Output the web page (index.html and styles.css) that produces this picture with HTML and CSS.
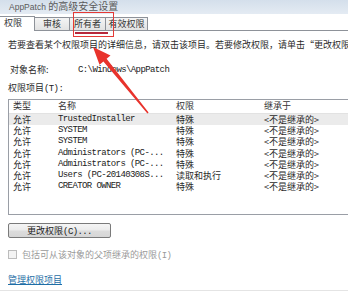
FILE: index.html
```html
<!DOCTYPE html>
<html>
<head>
<meta charset="utf-8">
<link rel="stylesheet" href="styles.css">
</head>
<body>
<div class="window">
  <div class="titlebar"><span class="lat">AppPatch </span>的高级安全设置</div>
  <div class="tabstrip">
    <div class="tab selected">权限</div>
    <div class="tab t2">审核</div>
    <div class="tab t3">所有者</div>
    <div class="tab t4">有效权限</div>
  </div>
  <div class="panel">
    <div class="desc">若要查看某个权限项目的详细信息，请双击该项目。若要修改权限，请单击“更改权限”。</div>
    <div class="objrow"><span class="objlabel">对象名称:</span><span class="m">C:\Windows\AppPatch</span></div>
    <div class="listlabel">权限项目<span class="m">(T):</span></div>
    <div class="listbox">
      <div class="row head"><span>类型</span><span>名称</span><span>权限</span><span>继承于</span></div>
      <div class="row sel"><span>允许</span><span class="m">TrustedInstaller</span><span>特殊</span><span>&lt;不是继承的&gt;</span></div>
      <div class="row"><span>允许</span><span class="m">SYSTEM</span><span>特殊</span><span>&lt;不是继承的&gt;</span></div>
      <div class="row"><span>允许</span><span class="m">SYSTEM</span><span>特殊</span><span>&lt;不是继承的&gt;</span></div>
      <div class="row"><span>允许</span><span class="m">Administrators (PC-...</span><span>特殊</span><span>&lt;不是继承的&gt;</span></div>
      <div class="row"><span>允许</span><span class="m">Administrators (PC-...</span><span>特殊</span><span>&lt;不是继承的&gt;</span></div>
      <div class="row"><span>允许</span><span class="m">Users (PC-20140308S...</span><span>读取和执行</span><span>&lt;不是继承的&gt;</span></div>
      <div class="row"><span>允许</span><span class="m">CREATOR OWNER</span><span>特殊</span><span>&lt;不是继承的&gt;</span></div>
    </div>
    <div class="btn">更改权限<span class="m">(C)...</span></div>
    <div class="checkrow"><span class="box"></span><span class="cklabel">包括可从该对象的父项继承的权限<span class="m">(I)</span></span></div>
    <div class="link">管理权限项目</div>
  </div>
  <div class="bottomline"></div>

  <div class="redbox"></div>
  <div class="redline"></div>
  <svg class="arrow" width="348" height="293" viewBox="0 0 348 293">
    <polygon fill="#e8332c" points="93,47 110.5,55.5 106.6,58.8 148.6,112.6 147.4,113.4 103.4,61.5 99.5,64.8"/>
  </svg>
</div>
</body>
</html>
```
FILE: styles.css
```css
html, body {
  margin: 0;
  padding: 0;
  background: #ffffff;
  overflow: hidden;
}
body {
  font-family: "Noto Sans CJK SC", sans-serif;
  font-size: 9px;
  color: #2a2a2a;
}
.window {
  position: relative;
  width: 348px;
  height: 293px;
  overflow: hidden;
}
.m {
  font-family: "Liberation Mono", monospace;
  font-size: 9px;
  letter-spacing: -0.6px;
  color: #222;
}
.lat {
  font-family: "Liberation Sans", sans-serif;
  font-size: 8.5px;
}
.titlebar {
  height: 14px;
  box-sizing: border-box;
  padding: 0 0 0 9px;
  line-height: 12px;
  font-size: 10px;
  color: #5a5a5a;
  background: linear-gradient(#d4dfeb, #e4ebf3);
  white-space: nowrap;
}
.tabstrip {
  height: 17px;
  box-sizing: border-box;
  border-bottom: 1px solid #8e9299;
  display: flex;
  align-items: flex-end;
}
.tab {
  height: 13px;
  box-sizing: border-box;
  border: 1px solid #8e9299;
  border-bottom: none;
  margin-left: -1px;
  background: linear-gradient(#f4f4f4, #e2e2e2);
  line-height: 12px;
  text-align: center;
  color: #333;
}
.tab.selected {
  height: 15px;
  margin-bottom: -1px;
  margin-left: -1px;
  width: 36px;
  background: #ffffff;
  position: relative;
  z-index: 1;
  text-align: left;
  padding-left: 4px;
}
.t2 { width: 36px; }
.t3 { width: 37px; }
.t4 { width: 43px; }
.panel {
  padding-left: 8px;
}
.desc {
  margin-top: 8px;
  line-height: 12px;
  white-space: nowrap;
}
.objrow {
  margin-top: 13px;
  line-height: 12px;
  padding-left: 2px;
  display: flex;
}
.objlabel {
  width: 68px;
}
.listlabel {
  margin-top: 6px;
  line-height: 12px;
}
.listbox {
  margin-top: 4px;
  height: 116px;
  box-sizing: border-box;
  border: 1px solid #9a9ea6;
  margin-right: -30px;
}
.row {
  display: grid;
  grid-template-columns: 45px 118px 88px 1fr;
  padding-left: 4px;
  height: 11.2px;
  line-height: 11.2px;
  white-space: nowrap;
}
.row.head {
  height: 14px;
  line-height: 12px;
  box-sizing: border-box;
  border-bottom: 1px solid #e2e2e2;
  color: #333;
}
.row.sel {
  background: #ebebeb;
}
.btn {
  margin-top: 8px;
  width: 103px;
  height: 15px;
  box-sizing: border-box;
  border: 1px solid #7a7a7a;
  border-radius: 2px;
  background: linear-gradient(#f5f5f5 0%, #ececec 45%, #dcdcdc 55%, #d6d6d6 100%);
  text-align: center;
  line-height: 13px;
  color: #222;
}
.checkrow {
  margin-top: 10px;
  height: 12px;
  display: flex;
  align-items: center;
}
.box {
  width: 9px;
  height: 9px;
  box-sizing: border-box;
  border: 1px solid #bcbcbc;
  background: #f3f3f3;
  margin-right: 5px;
}
.cklabel {
  color: #9a9a9a;
}
.cklabel .m {
  color: #9a9a9a;
}
.link {
  margin-top: 14px;
  line-height: 12px;
  color: #1f6ea6;
  text-decoration: underline;
  display: inline-block;
}
.bottomline {
  position: absolute;
  left: 0;
  right: 0;
  top: 290px;
  height: 1px;
  background: #e4e4e4;
}
.redbox {
  position: absolute;
  left: 73px;
  top: 12px;
  width: 41px;
  height: 25px;
  box-sizing: border-box;
  border: 1.5px solid #e53a36;
}
.redline {
  position: absolute;
  left: 75px;
  top: 32px;
  width: 33px;
  height: 2px;
  background: #b8283a;
}
.arrow {
  position: absolute;
  left: 0;
  top: 0;
}
```
